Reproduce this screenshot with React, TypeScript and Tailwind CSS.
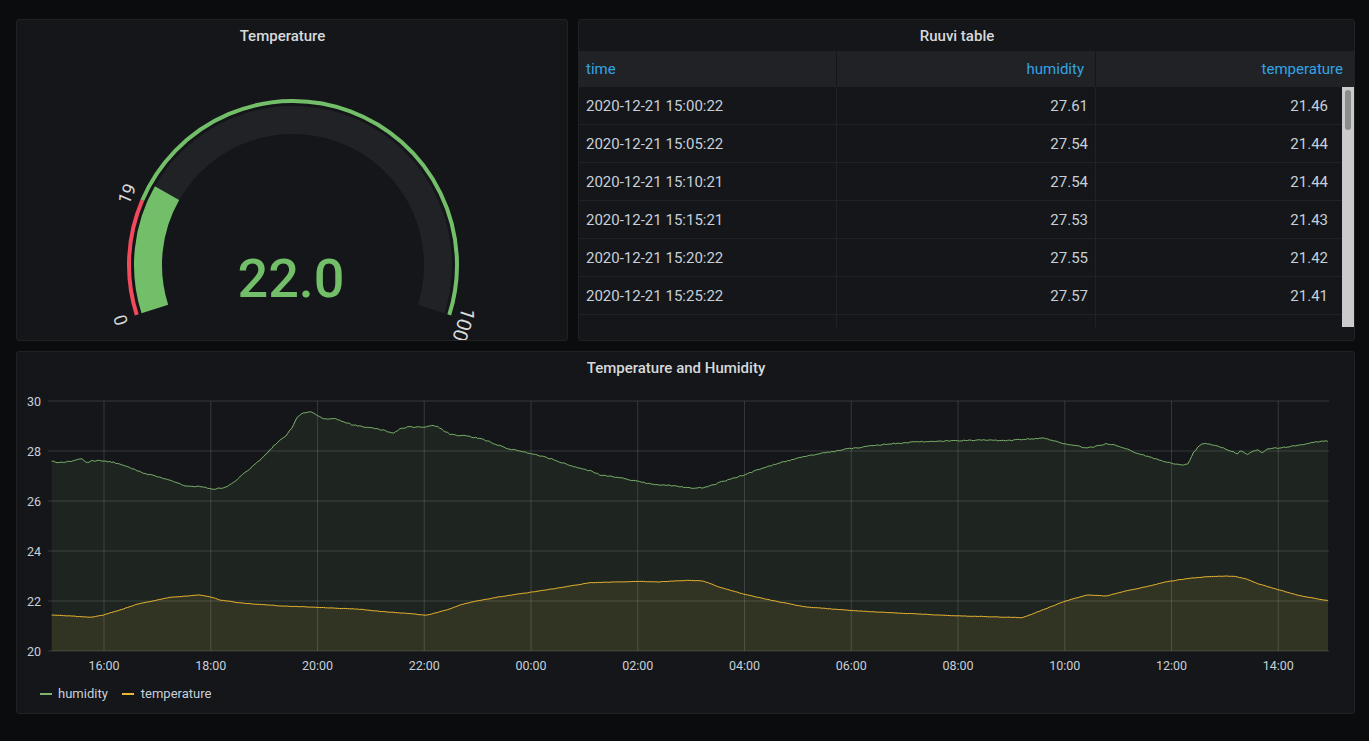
import React from "react";

const CX = 293;
const CY = 265;
const A0 = 197.7;
const A1 = -17.7;

function pt(a: number, r: number): [number, number] {
  const t = (a * Math.PI) / 180;
  return [CX + r * Math.cos(t), CY - r * Math.sin(t)];
}
function arc(a0: number, a1: number, r: number) {
  const [x0, y0] = pt(a0, r);
  const [x1, y1] = pt(a1, r);
  const large = a0 - a1 > 180 ? 1 : 0;
  return `M ${x0.toFixed(2)} ${y0.toFixed(2)} A ${r} ${r} 0 ${large} 1 ${x1.toFixed(2)} ${y1.toFixed(2)}`;
}
const ang = (v: number) => A0 - (v / 100) * (A0 - A1);

function Gauge() {
  const labels: { t: string; a: number; fs: number; shift: number }[] = [
    { t: "0", a: ang(0), fs: 18, shift: 0 },
    { t: "19", a: ang(19), fs: 18, shift: 0 },
    { t: "100", a: ang(100), fs: 20, shift: 5 },
  ];
  return (
    <svg width={550} height={289} viewBox="17 51 550 289" className="block">
      <path d={arc(ang(22), A1, 145)} stroke="#212226" strokeWidth={28} fill="none" />
      <path d={arc(A0, ang(22), 145)} stroke="#73bf69" strokeWidth={28} fill="none" />
      <path d={arc(A0, ang(19), 164)} stroke="#f2495c" strokeWidth={4} fill="none" />
      <path d={arc(ang(19), A1, 164)} stroke="#73bf69" strokeWidth={4} fill="none" />
      {labels.map((l) => {
        const rot = 90 - l.a;
        const [px, py] = pt(l.a, 181);
        const rr = (rot * Math.PI) / 180;
        const x = px + Math.cos(rr) * l.shift;
        const y = py + Math.sin(rr) * l.shift;
        return (
          <text
            key={l.t}
            x={x}
            y={y}
            transform={`rotate(${rot.toFixed(2)} ${x.toFixed(2)} ${y.toFixed(2)})`}
            textAnchor="middle"
            dominantBaseline="central"
            fontSize={l.fs}
            fill="#d8d9da"
            fontFamily="Roboto, sans-serif"
          >
            {l.t}
          </text>
        );
      })}
      <text
        x={291}
        y={297}
        textAnchor="middle"
        fontSize={54}
        fontWeight={500}
        fill="#73bf69"
        fontFamily="Roboto, sans-serif"
      >
        22.0
      </text>
    </svg>
  );
}

const rows: [string, string, string][] = [
  ["2020-12-21 15:00:22", "27.61", "21.46"],
  ["2020-12-21 15:05:22", "27.54", "21.44"],
  ["2020-12-21 15:10:21", "27.54", "21.44"],
  ["2020-12-21 15:15:21", "27.53", "21.43"],
  ["2020-12-21 15:20:22", "27.55", "21.42"],
  ["2020-12-21 15:25:22", "27.57", "21.41"],
  ["", "", ""],
];

function RuuviTable() {
  return (
    <div className="flex flex-col">
      <div className="grid grid-cols-[258px_259px_1fr] h-[36px] bg-[#202226] text-[15px] text-[#33a2e5]">
        <div className="flex items-center pl-[7px] border-r border-[#141619]">time</div>
        <div className="flex items-center justify-end pr-[11px] border-r border-[#141619]">humidity</div>
        <div className="flex items-center justify-end pr-[11px]">temperature</div>
      </div>
      <div className="flex h-[240px] overflow-hidden">
        <div className="flex-1 flex flex-col overflow-hidden">
          {rows.map((r, i) => (
            <div
              key={i}
              className="grid grid-cols-[258px_259px_1fr] h-[38px] shrink-0 border-b border-[#202226] text-[15px] text-[#c7d0d9]"
            >
              <div className="flex items-center pl-[7px] pt-[1px] border-r border-[#202226]">{r[0]}</div>
              <div className="flex items-center justify-end pr-[7px] pt-[1px] border-r border-[#202226]">{r[1]}</div>
              <div className="flex items-center justify-end pr-[14px] pt-[1px]">{r[2]}</div>
            </div>
          ))}
        </div>
        <div className="w-[12px] bg-[#cbcbcb] flex flex-col items-center pt-[3px]">
          <div className="w-[6px] h-[40px] rounded-full bg-[#8b8d8d]" />
        </div>
      </div>
    </div>
  );
}

const humPts: [number, number][] = [
  [51.7, 460.7], [56.7, 462.3], [66, 462], [76.7, 460], [81.7, 459], [86.7, 462.7], [91.7, 460.7],
  [103, 460.7], [112, 462], [123, 465], [133, 469], [143, 473], [157, 476.7], [170, 480],
  [185, 485.7], [200, 486.7], [211.7, 489], [220, 488.5], [226.7, 486.7], [233, 483], [243, 474],
  [252, 467], [260, 460], [267, 453], [273, 446.7], [280, 440], [286.7, 435], [291.7, 428],
  [296.7, 418], [303, 413], [310, 411.7], [316.7, 415], [325, 419], [336.7, 419], [345, 422],
  [353, 425], [363, 426.5], [373, 428], [383, 430], [393, 433], [400, 429], [406.7, 427],
  [416, 427], [426.7, 426.7], [433, 425.7], [438, 427], [443, 430], [450, 434], [455, 435],
  [466.7, 436], [480, 438.3], [493, 443], [506.7, 448.3], [530, 453.3], [546.7, 457.3],
  [560, 462], [573.3, 466.7], [593.3, 471.7], [600, 475], [620, 477.7], [640, 481.7],
  [653.3, 484.3], [673.3, 485.7], [693.3, 488.3], [706.7, 487.3], [720, 482.5], [730, 479.3],
  [743.3, 475], [770, 465.7], [803.3, 456.7], [846.7, 449], [886.7, 444], [920, 441.7],
  [953.3, 440.7], [986.7, 440], [1010, 440.5], [1026.7, 439], [1045, 438.3], [1055, 441],
  [1066.7, 444.3], [1086.7, 447.7], [1093, 447], [1106.7, 443.7], [1116.7, 445.3], [1133, 451.7],
  [1153, 458.3], [1166.7, 462], [1180, 465], [1188, 464], [1193, 453], [1200, 445],
  [1206.7, 443.3], [1220, 446.7], [1233, 451.7], [1236.7, 454.3], [1240, 451], [1243, 452],
  [1246.7, 454.7], [1252, 452], [1258.3, 449.3], [1261.7, 452.7], [1266.7, 449.3],
  [1283.3, 447.3], [1300, 445], [1313.3, 442.3], [1325, 440.7], [1328, 441.3],
];

const tempPts: [number, number][] = [
  [51.7, 615], [66.7, 615.7], [90, 617.3], [103.3, 615], [120, 610], [136.7, 604.3],
  [153.3, 601], [170, 597.3], [186.7, 596], [200, 595], [210, 596.7], [220, 600],
  [243.3, 603.3], [283.3, 606], [316.7, 607.3], [360, 609.3], [383.3, 611.7], [406.7, 613.3],
  [426.7, 615.3], [446.7, 610], [460, 605], [473.3, 601.7], [496.7, 597.3], [530, 592.3],
  [556.7, 588.3], [590, 582.7], [640, 581.3], [656.7, 582], [690, 580.3], [703.3, 581],
  [720, 587.3], [743.3, 594], [770, 600], [803.3, 606.7], [853.3, 610.7], [903.3, 613.3],
  [953.3, 615.7], [1010, 617.3], [1021.7, 617.7], [1030, 615], [1046.7, 608.3],
  [1063.3, 601.7], [1086.7, 595], [1106.7, 596], [1126.7, 590.7], [1146.7, 586.7],
  [1166.7, 581.7], [1186.7, 578.7], [1206.7, 576.7], [1226.7, 576], [1236.7, 576.7],
  [1246.7, 579], [1256.7, 583.3], [1276.7, 589.3], [1300, 595.7], [1328, 600.7],
];

function densify(pts: [number, number][], amp: number, seed: number): [number, number][] {
  const out: [number, number][] = [];
  let j = 0;
  const x0 = pts[0][0];
  const x1 = pts[pts.length - 1][0];
  for (let x = x0; x <= x1 + 0.001; x += 2) {
    while (j < pts.length - 2 && pts[j + 1][0] < x) j++;
    const [ax, ay] = pts[j];
    const [bx, by] = pts[j + 1];
    const t = Math.min(1, Math.max(0, (x - ax) / (bx - ax)));
    const n = Math.sin(x * 12.9898 + seed) * 43758.5453;
    const jitter = (n - Math.floor(n) - 0.5) * 2 * amp;
    out.push([x, ay + (by - ay) * t + jitter]);
  }
  const last = pts[pts.length - 1];
  out.push([last[0], last[1]]);
  return out;
}

function toPath(p: [number, number][]) {
  return p.map((q, i) => `${i === 0 ? "M" : "L"}${q[0].toFixed(1)} ${q[1].toFixed(2)}`).join(" ");
}

const xTicks = ["16:00", "18:00", "20:00", "22:00", "00:00", "02:00", "04:00", "06:00", "08:00", "10:00", "12:00", "14:00"];
const yTicks = [30, 28, 26, 24, 22, 20];

function Chart() {
  const hum = densify(humPts, 0.55, 1.3);
  const tmp = densify(tempPts, 0.2, 7.1);
  const humLine = toPath(hum);
  const tmpLine = toPath(tmp);
  const humFill = `${humLine} L1328 651 L51.7 651 Z`;
  const tmpFill = `${tmpLine} L1328 651 L51.7 651 Z`;
  return (
    <svg width={1337} height={297} viewBox="17 383 1337 297" className="block">
      <path d={humFill} fill="#7eb26d" fillOpacity={0.1} />
      <path d={tmpFill} fill="#eab839" fillOpacity={0.1} />
      {yTicks.map((v, i) => {
        const y = 401 + i * 50;
        return (
          <g key={v}>
            <line x1={48} x2={1329} y1={y} y2={y} stroke="#ffffff" strokeOpacity={0.14} strokeWidth={1} />
            <text
              x={41}
              y={y}
              textAnchor="end"
              dominantBaseline="central"
              fontSize={12.5}
              fill="#c7d0d9"
              fontFamily="Roboto, sans-serif"
            >
              {v}
            </text>
          </g>
        );
      })}
      {xTicks.map((t, i) => {
        const x = 104 + i * 106.75;
        return (
          <g key={t}>
            <line x1={x} x2={x} y1={401} y2={651} stroke="#ffffff" strokeOpacity={0.14} strokeWidth={1} />
            <text
              x={x}
              y={665}
              textAnchor="middle"
              dominantBaseline="central"
              fontSize={12.5}
              fill="#c7d0d9"
              fontFamily="Roboto, sans-serif"
            >
              {t}
            </text>
          </g>
        );
      })}
      <path d={humLine} fill="none" stroke="#7eb26d" strokeWidth={1} />
      <path d={tmpLine} fill="none" stroke="#eab839" strokeWidth={1} />
    </svg>
  );
}

function PanelTitle({ children }: { children: React.ReactNode }) {
  return (
    <div className="h-[31px] shrink-0 flex items-center justify-center pr-[19px] pt-[1px] text-[15px] font-medium text-[#d8d9da]">
      {children}
    </div>
  );
}

export default function App() {
  return (
    <div className="w-[1369px] h-[741px] overflow-hidden bg-[#0b0c0e] pt-[19px] pl-[16px] pr-[14px] font-['Roboto',sans-serif]">
      <div className="flex gap-[10px] h-[322px]">
        <div className="w-[552px] shrink-0 flex flex-col rounded-[3px] border border-[#202226] bg-[#141619] overflow-hidden">
          <PanelTitle>Temperature</PanelTitle>
          <Gauge />
        </div>
        <div className="flex-1 flex flex-col rounded-[3px] border border-[#202226] bg-[#141619] overflow-hidden">
          <PanelTitle>Ruuvi table</PanelTitle>
          <RuuviTable />
        </div>
      </div>
      <div className="mt-[10px] h-[363px] flex flex-col rounded-[3px] border border-[#202226] bg-[#141619] overflow-hidden">
        <PanelTitle>Temperature and Humidity</PanelTitle>
        <Chart />
        <div className="mt-[6px] h-[16px] flex items-center pl-[23px] text-[13px] text-[#c7d0d9]">
          <div className="flex items-center">
            <div className="w-[12px] h-[2px] bg-[#7eb26d]" />
            <span className="ml-[6px]">humidity</span>
          </div>
          <div className="flex items-center ml-[14px]">
            <div className="w-[12px] h-[2px] bg-[#eab839]" />
            <span className="ml-[7px]">temperature</span>
          </div>
        </div>
      </div>
    </div>
  );
}
